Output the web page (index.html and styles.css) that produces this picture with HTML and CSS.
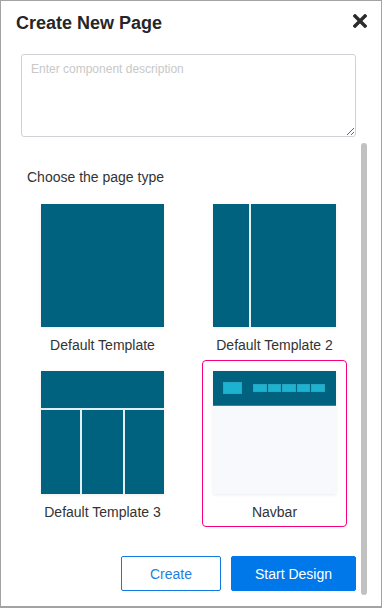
FILE: index.html
```html
<!DOCTYPE html>
<html lang="en">
<head>
  <meta charset="UTF-8" />
  <meta name="viewport" content="width=device-width, initial-scale=1" />
  <title>Create New Page</title>
  <link rel="stylesheet" href="styles.css">
</head>
<body>
  <section class="modal">
    <div class="modal-header">
      <h2 class="modal-title">Create New Page</h2>
      <button class="close-btn" title="Close">
        <svg width="14" height="14" viewBox="0 0 14 14">
          <path d="M2 2 L12 12 M12 2 L2 12" stroke="#2b2b2b" stroke-width="3.4" stroke-linecap="square" />
        </svg>
      </button>
    </div>

    <div class="desc">
      <textarea placeholder="Enter component description"></textarea>
    </div>

    <div class="page-types">
      <p class="section-label">Choose the page type</p>
      <div class="type-grid">
        <div class="type-card">
          <div class="tile tile-plain"></div>
          <span class="type-name">Default Template</span>
        </div>
        <div class="type-card">
          <div class="tile tile-split">
            <div class="part"></div>
            <div class="part"></div>
          </div>
          <span class="type-name">Default Template 2</span>
        </div>
        <div class="type-card">
          <div class="tile tile-cols">
            <div class="part top"></div>
            <div class="part"></div>
            <div class="part"></div>
            <div class="part"></div>
          </div>
          <span class="type-name">Default Template 3</span>
        </div>
        <div class="type-card selected">
          <div class="tile tile-navbar">
            <div class="nav-strip">
              <div class="nav-logo"></div>
              <div class="nav-links">
                <span></span><span></span><span></span><span></span><span></span>
              </div>
            </div>
          </div>
          <span class="type-name">Navbar</span>
        </div>
      </div>
    </div>

    <div class="modal-footer">
      <button class="btn btn-outline">Create</button>
      <button class="btn btn-primary">Start Design</button>
    </div>

    <div class="scroll-thumb"></div>
  </section>
</body>
</html>
```

FILE: styles.css
```css
* {
  box-sizing: border-box;
}
body {
  margin: 0;
  padding: 0;
  background: #a3a3a3;
  font-family: 'Liberation Sans', Arial, sans-serif;
  height: 608px;
  overflow: hidden;
}
.modal {
  position: relative;
  margin: 1px 1px 0 1px;
  width: 380px;
  height: 605px;
  background: #fff;
}
.modal-header {
  display: flex;
  justify-content: space-between;
  align-items: flex-start;
  padding: 12px 14px 0 15px;
}
.modal-title {
  margin: 0;
  font-size: 18px;
  line-height: 20px;
  font-weight: 700;
  color: #262626;
}
.close-btn {
  margin-top: 1px;
  padding: 0;
  border: none;
  background: none;
  width: 14px;
  height: 14px;
  cursor: pointer;
}
.close-btn svg {
  display: block;
}
.desc {
  padding: 21px 25px 0 20px;
}
.desc textarea {
  display: block;
  width: 100%;
  height: 83px;
  padding: 7px 9px;
  border: 1px solid #cfd3d7;
  border-radius: 3px;
  font-family: 'Liberation Sans', Arial, sans-serif;
  font-size: 12px;
  line-height: 14px;
  color: #333;
  outline: none;
}
.desc textarea::placeholder {
  color: #c8c8c8;
}
.page-types {
  padding: 32px 31px 0 26px;
}
.section-label {
  margin: 0 0 8px;
  font-size: 14px;
  line-height: 16px;
  color: #333;
}
.type-grid {
  display: grid;
  grid-template-columns: 145px 145px;
  column-gap: 27px;
  justify-content: center;
}
.type-card {
  display: flex;
  flex-direction: column;
  align-items: center;
  padding: 10px 10px 6px;
  border: 1px solid transparent;
  border-radius: 4px;
  cursor: pointer;
}
.type-card.selected {
  border-color: #f7007f;
}
.tile {
  width: 123px;
  height: 123px;
  box-shadow: 0 1px 3px rgba(0, 0, 0, 0.08);
}
.tile-plain {
  background: #00627f;
}
.tile-split {
  display: grid;
  grid-template-columns: 36px 1fr;
  column-gap: 2px;
  background: #e2f0f4;
}
.tile-cols {
  display: grid;
  grid-template-columns: 39px 41px 39px;
  grid-template-rows: 37px 1fr;
  gap: 2px;
  background: #e2f0f4;
}
.tile-cols .top {
  grid-column: 1 / 4;
}
.part {
  background: #00627f;
}
.tile-navbar {
  background: #f7f9fc;
}
.nav-strip {
  display: flex;
  align-items: flex-start;
  height: 35px;
  padding: 11px 0 0 10px;
  background: #00627f;
  border-bottom: 1px solid #2c8aa3;
}
.nav-logo {
  width: 19px;
  height: 12px;
  background: #1bb3d0;
  border: 1px solid #25a6c2;
}
.nav-links {
  display: flex;
  gap: 1px;
  margin: 2px 0 0 11px;
}
.nav-links span {
  width: 13.6px;
  height: 8px;
  background: #1bb3d0;
  border: 1px solid #27a5c1;
}
.type-name {
  margin-top: 10px;
  font-size: 14px;
  line-height: 16px;
  color: #333;
  white-space: nowrap;
}
.modal-footer {
  display: flex;
  justify-content: flex-end;
  gap: 10px;
  padding: 29px 25px 0 0;
}
.btn {
  height: 35px;
  font-family: 'Liberation Sans', Arial, sans-serif;
  font-size: 14px;
  border-radius: 2px;
  cursor: pointer;
}
.btn-outline {
  width: 100px;
  background: #fff;
  color: #1f7fe0;
  border: 1px solid #1379e2;
}
.btn-primary {
  width: 125px;
  background: #0078ea;
  color: #fff;
  border: 1px solid #0078ea;
}
.scroll-thumb {
  position: absolute;
  top: 142px;
  left: 360px;
  width: 6px;
  height: 452px;
  border-radius: 3px;
  background: #c1c1c1;
}
```
